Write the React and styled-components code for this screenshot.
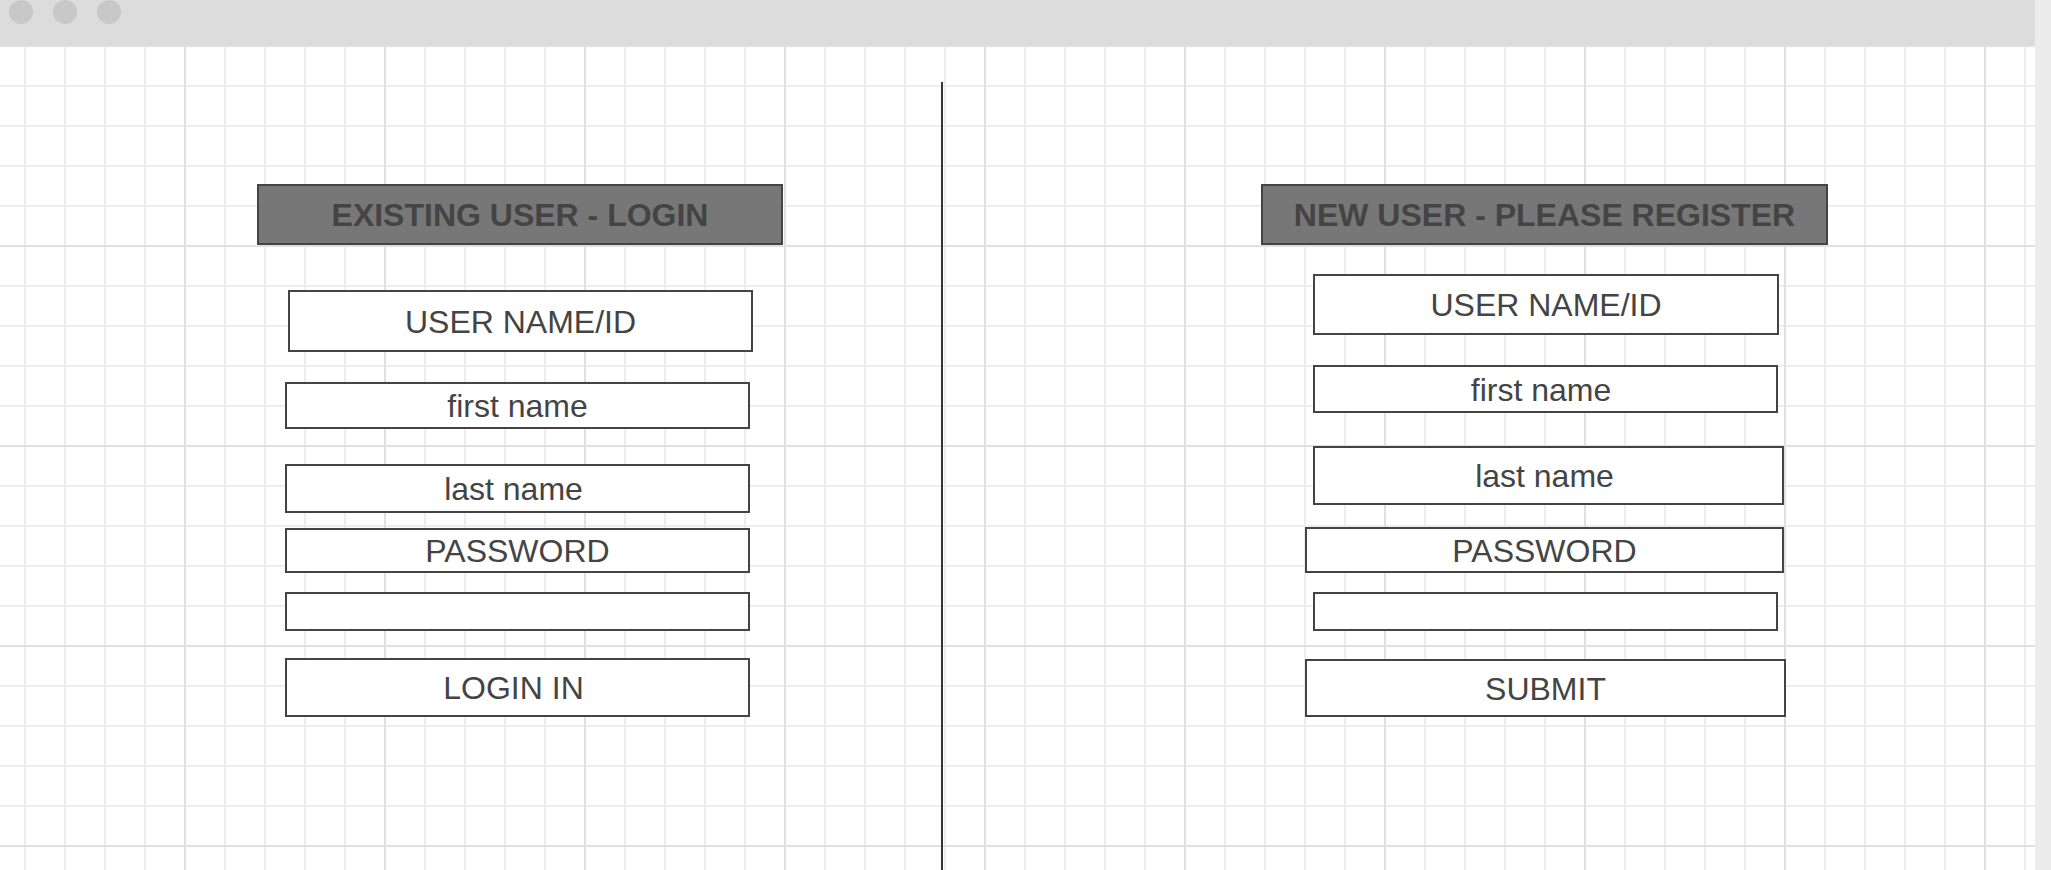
import React from 'react';
import styled, { createGlobalStyle } from 'styled-components';

const loginFields = [
    { label: 'USER NAME/ID', ml: 288, mt: 45, w: 465, h: 62 },
    { label: 'first name', ml: 285, mt: 30, w: 465, h: 47 },
    { label: 'last name', ml: 285, mt: 35, w: 465, h: 49, shift: 8 },
    { label: 'PASSWORD', ml: 285, mt: 15, w: 465, h: 45 },
    { label: '', ml: 285, mt: 19, w: 465, h: 39 },
    { label: 'LOGIN IN', ml: 285, mt: 27, w: 465, h: 59, shift: 8 },
];

const registerFields = [
    { label: 'USER NAME/ID', ml: 370, mt: 29, w: 466, h: 61 },
    { label: 'first name', ml: 370, mt: 30, w: 465, h: 48, shift: 9 },
    { label: 'last name', ml: 370, mt: 33, w: 471, h: 59, shift: 8 },
    { label: 'PASSWORD', ml: 362, mt: 22, w: 479, h: 46 },
    { label: '', ml: 370, mt: 19, w: 465, h: 39 },
    { label: 'SUBMIT', ml: 362, mt: 28, w: 481, h: 58 },
];

const Form = ({ title, headerLeft, headerWidth, fields }) => (
    <Panel>
        <Header $ml={headerLeft} $w={headerWidth}>{title}</Header>
        {fields.map((f, i) => (
            <Field key={i} $ml={f.ml} $mt={f.mt} $w={f.w} $h={f.h} $shift={f.shift || 0}>
                {f.label}
            </Field>
        ))}
    </Panel>
);

const App = () => {
    return (
        <>
            <GlobalStyle />
            <Window>
                <Main>
                    <TopBar>
                        <Dot />
                        <Dot />
                        <Dot />
                    </TopBar>
                    <Canvas>
                        <Form
                            title="EXISTING USER - LOGIN"
                            headerLeft={257}
                            headerWidth={526}
                            fields={loginFields}
                        />
                        <Divider />
                        <Form
                            title="NEW USER - PLEASE REGISTER"
                            headerLeft={318}
                            headerWidth={567}
                            fields={registerFields}
                        />
                    </Canvas>
                </Main>
                <Scrollbar />
            </Window>
        </>
    );
};

const GlobalStyle = createGlobalStyle`
    html, body {
        margin: 0;
        padding: 0;
    }
    body {
        font-family: "Liberation Sans", Arial, sans-serif;
        background: #ffffff;
        overflow: hidden;
    }
`;

const Window = styled.div`
    display: flex;
    width: 100vw;
    height: 100vh;
    overflow: hidden;
`;

const Main = styled.div`
    flex: 1;
    min-width: 0;
    display: flex;
    flex-direction: column;
`;

const TopBar = styled.div`
    height: 45px;
    flex-shrink: 0;
    background: #dcdcdc;
    display: flex;
    align-items: flex-start;
    gap: 20px;
    padding-left: 9px;
`;

const Dot = styled.span`
    width: 24px;
    height: 24px;
    border-radius: 50%;
    background: #c8c8c8;
`;

const Canvas = styled.div`
    flex: 1;
    display: grid;
    grid-template-columns: 941px 2px 1fr;
    background-color: #ffffff;
    background-image:
        linear-gradient(to right, #e0e0e0 2px, transparent 2px),
        linear-gradient(to bottom, #e0e0e0 2px, transparent 2px),
        linear-gradient(to right, #ededed 2px, transparent 2px),
        linear-gradient(to bottom, #ededed 2px, transparent 2px);
    background-size: 200px 200px, 200px 200px, 40px 40px, 40px 40px;
    background-position: 184px 0, 0 0, 24px 0, 0 0;
`;

const Panel = styled.div`
    display: flex;
    flex-direction: column;
    align-items: flex-start;
    padding-top: 139px;
`;

const Divider = styled.div`
    margin-top: 37px;
    background: #333333;
`;

const Header = styled.div`
    box-sizing: border-box;
    margin-left: ${(p) => p.$ml}px;
    width: ${(p) => p.$w}px;
    height: 61px;
    padding-top: 2px;
    display: flex;
    align-items: center;
    justify-content: center;
    background: #777777;
    border: 2px solid #444444;
    color: #444444;
    font-size: 32px;
    font-weight: bold;
    white-space: nowrap;
`;

const Field = styled.div`
    box-sizing: border-box;
    margin-left: ${(p) => p.$ml}px;
    margin-top: ${(p) => p.$mt}px;
    width: ${(p) => p.$w}px;
    height: ${(p) => p.$h}px;
    padding-right: ${(p) => p.$shift}px;
    padding-top: 2px;
    display: flex;
    align-items: center;
    justify-content: center;
    background: #ffffff;
    border: 2px solid #444444;
    color: #444444;
    font-size: 32px;
    white-space: nowrap;
`;

const Scrollbar = styled.div`
    width: 16px;
    flex-shrink: 0;
    background: #ececec;
`;

export default App;
